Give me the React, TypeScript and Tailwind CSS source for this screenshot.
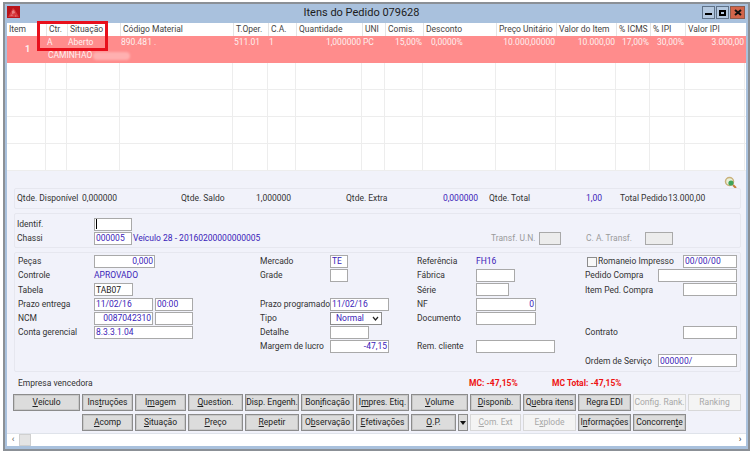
const columns = [
  { head: "Item", cell: "" },
  { head: "Ctr.", cell: "A" },
  { head: "Situação", cell: "Aberto" },
  { head: "Código Material", cell: "890.481 ." },
  { head: "T.Oper.", cell: "511.01" },
  { head: "C.A.", cell: "1" },
  { head: "Quantidade", cell: "1,000000", right: true },
  { head: "UNI", cell: "PC" },
  { head: "Comis.", cell: "15,00%", right: true },
  { head: "Desconto", cell: "0,0000%", pad: true },
  { head: "Preço Unitário", cell: "10.000,00000", right: true },
  { head: "Valor do Item", cell: "10.000,00", right: true },
  { head: "% ICMS", cell: "17,00%", right: true },
  { head: "% IPI", cell: "30,00%", right: true },
  { head: "Valor IPI", cell: "3.000,00", right: true },
];

const gridCols =
  "grid grid-cols-[39px_21px_53px_113px_35px_28px_66px_23px_38px_73px_60px_60px_34px_35px_60px]";

type Btn = { label: string; mn?: number; w: string; off?: boolean };

const row1: Btn[] = [
  { label: "Veículo", mn: 0, w: "w-[67px]" },
  { label: "Instruções", mn: 3, w: "w-[51px]" },
  { label: "Imagem", mn: 1, w: "w-[51px]" },
  { label: "Question.", mn: 0, w: "w-[55px]" },
  { label: "Disp. Engenh.", w: "w-[54px]" },
  { label: "Bonificação", mn: 3, w: "w-[53px]" },
  { label: "Impres. Etiq.", mn: 1, w: "w-[53px]" },
  { label: "Volume", mn: 0, w: "w-[57px]" },
  { label: "Disponib.", mn: 0, w: "w-[51px]" },
  { label: "Quebra itens", mn: 1, w: "w-[53px]" },
  { label: "Regra EDI", w: "w-[53px]" },
  { label: "Config. Rank.", w: "w-[53px]", off: true },
  { label: "Ranking", w: "w-[53px]", off: true },
];

const row2: Btn[] = [
  { label: "Acomp", mn: 0, w: "w-[51px]" },
  { label: "Situação", mn: 0, w: "w-[51px]" },
  { label: "Preço", mn: 0, w: "w-[55px]" },
  { label: "Repetir", mn: 0, w: "w-[54px]" },
  { label: "Observação", mn: 1, w: "w-[53px]" },
  { label: "Efetivações", mn: 0, w: "w-[53px]" },
  { label: "O.P.", mn: 0, w: "w-[45px]" },
];

const row2End: Btn[] = [
  { label: "Com. Ext", mn: 0, w: "w-[51px]", off: true },
  { label: "Explode", mn: 1, w: "w-[53px]", off: true },
  { label: "Informações", mn: 1, w: "w-[53px]" },
  { label: "Concorrente", mn: 9, w: "w-[53px]" },
];

function Button({ label, mn, w, off }: Btn) {
  return (
    <div
      className={`${w} h-[17px] shrink-0 flex items-center justify-center whitespace-nowrap border ${
        off
          ? "border-[#d8d8d8] bg-[#f4f4f4] text-[#a8a8a8]"
          : "border-[#8c8c8c] bg-[#dcdcdc] text-[#222] shadow-[inset_0_0_0_1px_#c8c8c8]"
      }`}
    >
      {mn === undefined ? (
        label
      ) : (
        <>
          {label.slice(0, mn)}
          <u>{label[mn]}</u>
          {label.slice(mn + 1)}
        </>
      )}
    </div>
  );
}

function Input({
  w,
  value,
  right,
  dark,
  off,
  cursor,
}: {
  w: string;
  value?: string;
  right?: boolean;
  dark?: boolean;
  off?: boolean;
  cursor?: boolean;
}) {
  return (
    <div
      className={`${w} h-[13px] shrink-0 flex items-center px-[1px] border border-[#a9a9a9] whitespace-nowrap ${
        off ? "bg-[#ececec]" : "bg-white"
      } ${right ? "justify-end" : ""} ${dark ? "text-[#222]" : "text-[#3a22b8]"}`}
    >
      {cursor && <span className="w-[1px] h-[10px] bg-black" />}
      {value}
    </div>
  );
}

function Cell({ w, label, children }: { w?: string; label?: string; children?: React.ReactNode }) {
  return (
    <div className="h-[14.2px] flex items-center whitespace-nowrap">
      {label && <span className={`${w ?? "w-[76px]"} shrink-0`}>{label}</span>}
      {children}
    </div>
  );
}

export default function App() {
  return (
    <div className="w-[750px] h-[453px] overflow-hidden bg-white pt-[2px] pl-[3px] pb-[2px] font-['Roboto',sans-serif] text-[8.5px] text-[#333]">
      <div className="relative h-full border-2 border-[#8b9096] bg-[#a9c1dd] px-[2px] flex flex-col">
        {/* title bar */}
        <div className="relative h-[19px] shrink-0 flex items-center justify-center text-[11px] text-[#1c1c1c] pr-[30px]">
          <svg className="absolute left-0 top-[2px]" width="13" height="12" viewBox="0 0 13 12">
            <rect width="13" height="12" fill="#b8141a" />
            <path d="M1 11 L6 2 L8 4 L12 11 Z" fill="#d9383c" />
            <path d="M5 5 L7 4 L8 7 L5 8 Z" fill="#e88080" />
            <path d="M3 10 L5 8 L6 10 Z M8 9 L10 10 L8 11 Z" fill="#e06a6a" />
          </svg>
          Itens do Pedido 079628
          <div className="absolute right-[1px] top-[2px] flex gap-[1px]">
            <div className="w-[13px] h-[13px] bg-[#b4c8df] border border-[#5f7288] flex items-center justify-center">
              <span className="w-[7px] h-[2px] mt-[3px] bg-black" />
            </div>
            <div className="w-[13px] h-[13px] bg-[#b4c8df] border border-[#5f7288] flex items-center justify-center">
              <span className="w-[7px] h-[6px] border-2 border-black" />
            </div>
            <div className="w-[15px] h-[13px] bg-[#d3654a] border border-[#8c5a4c] flex items-center justify-center">
              <svg width="8" height="7" viewBox="0 0 8 7">
                <path d="M1 1 L7 6 M7 1 L1 6" stroke="#111" strokeWidth="2" />
              </svg>
            </div>
          </div>
        </div>

        {/* items grid */}
        <div className="relative h-[148px] shrink-0 bg-white border-b border-[#a8acb4]">
          <div className={`${gridCols} h-[13px] items-center`}>
            {columns.map((c) => (
              <div key={c.head} className="pl-[2px] whitespace-nowrap text-[#444] border-l border-[#e4e4e4] first:border-l-0">
                {c.head}
              </div>
            ))}
          </div>
          <div className="relative h-[27px] bg-[#ff8c8c] text-[#fdf0f0]">
            <div className={`${gridCols} h-[13px] items-center`}>
              {columns.map((c) => (
                <div
                  key={c.head}
                  className={`whitespace-nowrap px-[1px] ${c.right ? "text-right" : ""} ${c.pad ? "pl-[8px]" : ""}`}
                >
                  {c.cell}
                </div>
              ))}
            </div>
            <div className="flex items-center h-[13px] pl-[41px]">
              <span>CAMINHAO</span>
              <span className="w-[37px] h-[8px] ml-[1px] rounded-full bg-[#ffb0b0] blur-[1px]" />
            </div>
            <span className="absolute left-[18px] top-[7px] font-bold text-[9px]">1</span>
          </div>
          {[0, 1, 2, 3].map((i) => (
            <div key={i} className={`${gridCols} h-[27px] border-b border-[#ededed]`}>
              {columns.map((c) => (
                <div key={c.head} className="border-r border-[#ededed]" />
              ))}
            </div>
          ))}
          {/* marcacao vermelha da captura */}
          <div className="absolute left-[30px] top-[-2px] w-[71px] h-[30px] border-[3px] border-[#e8101c]" />
        </div>

        {/* detail panel */}
        <div className="flex-1 min-h-0 bg-[#f1f2fa] pl-[7px] pr-[5px] flex flex-col">
          <div className="h-[17px] shrink-0 flex justify-end items-center pr-[4px] pt-[5px]">
            <svg width="13" height="13" viewBox="0 0 13 13">
              <circle cx="5.5" cy="5.5" r="4" fill="#e8f0d8" stroke="#c9b07a" strokeWidth="1.5" />
              <circle cx="7" cy="7" r="2.6" fill="#3fa45a" />
              <path d="M9 9 L12 12" stroke="#c8803c" strokeWidth="2" />
            </svg>
          </div>

          <div className="h-[21px] shrink-0 flex items-center border border-[#e6e7ef] rounded-[2px] pl-[2px] whitespace-nowrap">
            <span className="w-[65px]">Qtde. Disponível</span>
            <span className="w-[99px]">0,000000</span>
            <span className="w-[75px]">Qtde. Saldo</span>
            <span className="w-[90px]">1,000000</span>
            <span className="w-[56px]">Qtde. Extra</span>
            <span className="w-[76px] text-right mr-[11px] text-[#3a22b8]">0,000000</span>
            <span className="w-[60px]">Qtde. Total</span>
            <span className="w-[53px] text-right mr-[18px] text-[#3a22b8]">1,00</span>
            <span className="w-[48px]">Total Pedido</span>
            <span>13.000,00</span>
          </div>

          <div className="mt-[4px] h-[35px] shrink-0 border border-[#e6e7ef] rounded-[2px] pl-[2px] flex flex-col justify-end pb-[1.4px]">
            <Cell w="w-[77px]" label="Identif.">
              <Input w="w-[38px]" cursor />
            </Cell>
            <Cell w="w-[77px]" label="Chassi">
              <Input w="w-[38px]" value="000005" />
              <span className="ml-[1px] w-[358px] shrink-0 text-[#3a22b8]">Veículo 28 - 20160200000000005</span>
              <span className="w-[48px] text-[#9a9a9a]">Transf. U.N.</span>
              <Input w="w-[22px]" off />
              <span className="ml-[25px] w-[59px] text-[#9a9a9a]">C. A. Transf.</span>
              <Input w="w-[28px]" off />
            </Cell>
          </div>

          <div className="mt-[4px] h-[120px] shrink-0 border border-[#e6e7ef] rounded-[2px] pl-[3px] pt-[1.5px] flex">
            <div className="w-[242px] shrink-0">
              <Cell label="Peças">
                <Input w="w-[61px]" value="0,000" right />
              </Cell>
              <Cell label="Controle">
                <span className="text-[#3a22b8]">APROVADO</span>
              </Cell>
              <Cell label="Tabela">
                <Input w="w-[39px]" value="TAB07" dark />
              </Cell>
              <Cell label="Prazo entrega">
                <Input w="w-[59px]" value="11/02/16" />
                <span className="w-[2px]" />
                <Input w="w-[38px]" value="00:00" />
              </Cell>
              <Cell label="NCM">
                <Input w="w-[59px]" value="0087042310" right />
                <span className="w-[2px]" />
                <Input w="w-[38px]" />
              </Cell>
              <Cell label="Conta gerencial">
                <Input w="w-[99px]" value="8.3.3.1.04" />
              </Cell>
            </div>

            <div className="w-[157px] shrink-0">
              <Cell w="w-[70px]" label="Mercado">
                <Input w="w-[18px]" value="TE" />
              </Cell>
              <Cell w="w-[70px]" label="Grade">
                <Input w="w-[18px]" />
              </Cell>
              <Cell />
              <Cell w="w-[70px]" label="Prazo programado">
                <Input w="w-[59px]" value="11/02/16" />
              </Cell>
              <Cell w="w-[70px]" label="Tipo">
                <div className="w-[52px] h-[13px] flex items-center justify-between pl-[5px] pr-[2px] border border-[#8c8c8c] bg-white text-[#3a22b8]">
                  Normal
                  <svg width="7" height="5" viewBox="0 0 7 5">
                    <path d="M1 1 L3.5 4 L6 1" fill="none" stroke="#222" strokeWidth="1.2" />
                  </svg>
                </div>
              </Cell>
              <Cell w="w-[70px]" label="Detalhe">
                <Input w="w-[39px]" />
              </Cell>
              <Cell w="w-[70px]" label="Margem de lucro">
                <Input w="w-[59px]" value="-47,15" right />
              </Cell>
            </div>

            <div className="w-[168px] shrink-0">
              <Cell w="w-[59px]" label="Referência">
                <span className="text-[#3a22b8]">FH16</span>
              </Cell>
              <Cell w="w-[59px]" label="Fábrica">
                <Input w="w-[39px]" />
              </Cell>
              <Cell w="w-[59px]" label="Série">
                <Input w="w-[33px]" />
              </Cell>
              <Cell w="w-[59px]" label="NF">
                <Input w="w-[60px]" value="0" right />
              </Cell>
              <Cell w="w-[59px]" label="Documento">
                <Input w="w-[60px]" />
              </Cell>
              <Cell />
              <Cell w="w-[59px]" label="Rem. cliente">
                <Input w="w-[79px]" />
              </Cell>
            </div>

            <div className="w-[152px] shrink-0">
              <Cell>
                <span className="ml-[2px] mr-[1px] w-[10px] h-[10px] shrink-0 border border-[#8c8c8c] bg-[#f8f8f8]" />
                <span className="w-[85px] shrink-0">Romaneio Impresso</span>
                <Input w="w-[54px]" value="00/00/00" />
              </Cell>
              <Cell w="w-[73px]" label="Pedido Compra">
                <Input w="w-[79px]" />
              </Cell>
              <Cell w="w-[98px]" label="Item Ped. Compra">
                <Input w="w-[54px]" />
              </Cell>
              <Cell />
              <Cell />
              <Cell w="w-[98px]" label="Contrato">
                <Input w="w-[54px]" />
              </Cell>
              <Cell />
              <Cell w="w-[73px]" label="Ordem de Serviço">
                <Input w="w-[79px]" value="000000/" />
              </Cell>
            </div>
          </div>

          <div className="h-[23px] shrink-0 flex items-center whitespace-nowrap pl-[4px]">
            <span className="w-[451px]">Empresa vencedora</span>
            <span className="w-[83px] text-[#ee1111] font-bold">MC: -47,15%</span>
            <span className="text-[#ee1111] font-bold">MC Total: -47,15%</span>
          </div>

          <div className="flex gap-[2px] mt-[-1px] ml-[-1px]">
            {row1.map((b) => (
              <Button key={b.label} {...b} />
            ))}
          </div>
          <div className="flex gap-[2px] mt-[3px] ml-[68px]">
            {row2.map((b) => (
              <Button key={b.label} {...b} />
            ))}
            <div className="w-[10px] h-[17px] shrink-0 border border-[#8c8c8c] bg-[#dcdcdc] flex items-center justify-center">
              <svg width="6" height="4" viewBox="0 0 6 4">
                <path d="M0 0 H6 L3 4 Z" fill="#111" />
              </svg>
            </div>
            {row2End.map((b) => (
              <Button key={b.label} {...b} />
            ))}
          </div>
        </div>

        {/* horizontal scrollbar */}
        <div className="h-[13px] shrink-0 bg-white flex items-center justify-between text-[#555] border-t border-[#dfe3ea]">
          <div className="flex items-center h-full">
            <span className="w-[12px] text-center text-[9px]">‹</span>
            <span className="w-[12px] h-full bg-[#e4e4e4] border border-[#d0d0d0]" />
          </div>
          <span className="w-[12px] text-center text-[9px] font-bold">›</span>
        </div>
        <div className="h-[3px] shrink-0" />
      </div>
    </div>
  );
}
